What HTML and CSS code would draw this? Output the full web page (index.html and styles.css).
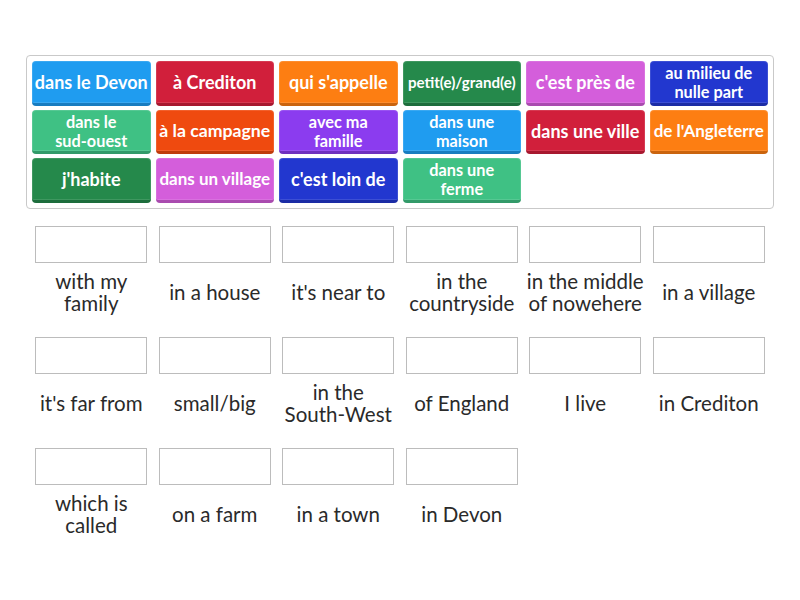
FILE: index.html
```html
<!DOCTYPE html>
<html>
<head>
<meta charset="utf-8">
<link rel="stylesheet" href="styles.css">
</head>
<body>
<div class="page">
  <div class="bank">
    <div class="tile blue">dans le Devon</div>
    <div class="tile crimson">à Crediton</div>
    <div class="tile orange">qui s'appelle</div>
    <div class="tile dkgreen fs15">petit(e)/grand(e)</div>
    <div class="tile magenta">c'est près de</div>
    <div class="tile dkblue two">au milieu de<br>nulle part</div>
    <div class="tile teal two">dans le<br>sud-ouest</div>
    <div class="tile orangered fs178">à la campagne</div>
    <div class="tile purple two">avec ma<br>famille</div>
    <div class="tile blue two">dans une<br>maison</div>
    <div class="tile crimson">dans une ville</div>
    <div class="tile orange fs17">de l'Angleterre</div>
    <div class="tile dkgreen">j'habite</div>
    <div class="tile magenta fs17">dans un village</div>
    <div class="tile dkblue">c'est loin de</div>
    <div class="tile teal two">dans une<br>ferme</div>
  </div>
  <div class="targets">
    <div class="cell"><div class="box"></div><div class="label">with my<br>family</div></div>
    <div class="cell"><div class="box"></div><div class="label">in a house</div></div>
    <div class="cell"><div class="box"></div><div class="label">it's near to</div></div>
    <div class="cell"><div class="box"></div><div class="label">in the<br>countryside</div></div>
    <div class="cell"><div class="box"></div><div class="label">in the middle<br>of nowehere</div></div>
    <div class="cell"><div class="box"></div><div class="label">in a village</div></div>
    <div class="cell"><div class="box"></div><div class="label">it's far from</div></div>
    <div class="cell"><div class="box"></div><div class="label">small/big</div></div>
    <div class="cell"><div class="box"></div><div class="label">in the<br>South-West</div></div>
    <div class="cell"><div class="box"></div><div class="label">of England</div></div>
    <div class="cell"><div class="box"></div><div class="label">I live</div></div>
    <div class="cell"><div class="box"></div><div class="label">in Crediton</div></div>
    <div class="cell"><div class="box"></div><div class="label">which is<br>called</div></div>
    <div class="cell"><div class="box"></div><div class="label">on a farm</div></div>
    <div class="cell"><div class="box"></div><div class="label">in a town</div></div>
    <div class="cell"><div class="box"></div><div class="label">in Devon</div></div>
  </div>
</div>
</body>
</html>
```

FILE: styles.css
```css
html, body {
  margin: 0;
  padding: 0;
  background: #fff;
}
.page {
  padding: 55px 26px 0;
  font-family: Lato, "Open Sans", sans-serif;
}
.bank {
  border: 1px solid #c9c9c9;
  border-radius: 4px;
  padding: 5px;
  display: grid;
  grid-template-columns: repeat(6, 1fr);
  column-gap: 5px;
  row-gap: 4px;
}
.tile {
  height: 44.5px;
  box-sizing: border-box;
  border-radius: 4px;
  border-bottom: 3px solid rgba(0,0,0,0.2);
  box-shadow: inset 0 0 0 1px rgba(255,255,255,0.12);
  display: flex;
  align-items: center;
  justify-content: center;
  text-align: center;
  color: #fff;
  font-weight: 700;
  font-size: 18px;
  line-height: 20px;
  white-space: nowrap;
  padding-top: 1px;
}
.tile.fs178 { font-size: 17.7px; }
.tile.fs17 { font-size: 17px; }
.tile.fs15 { font-size: 15.1px; }
.tile.two { font-size: 16.3px; line-height: 19px; }
.blue { background: #1f9cf0; }
.crimson { background: #d11f3b; }
.orange { background: #fd7e12; }
.dkgreen { background: #25894b; }
.magenta { background: #d45edb; }
.dkblue { background: #2237cf; }
.teal { background: #3fc184; }
.orangered { background: #ef4a0f; }
.purple { background: #8b3cef; }

.targets {
  margin-top: 17.5px;
  padding: 0 6px;
  display: grid;
  grid-template-columns: repeat(6, 1fr);
  column-gap: 5px;
  row-gap: 17px;
}
.cell {
  display: flex;
  flex-direction: column;
  align-items: center;
}
.box {
  width: 112px;
  height: 37px;
  box-sizing: border-box;
  border: 1px solid #bcbcbc;
  background: #fff;
}
.label {
  height: 57px;
  display: flex;
  align-items: center;
  justify-content: center;
  text-align: center;
  color: #2a2a2a;
  font-size: 20.5px;
  font-weight: 400;
  line-height: 22px;
  white-space: nowrap;
}
```
